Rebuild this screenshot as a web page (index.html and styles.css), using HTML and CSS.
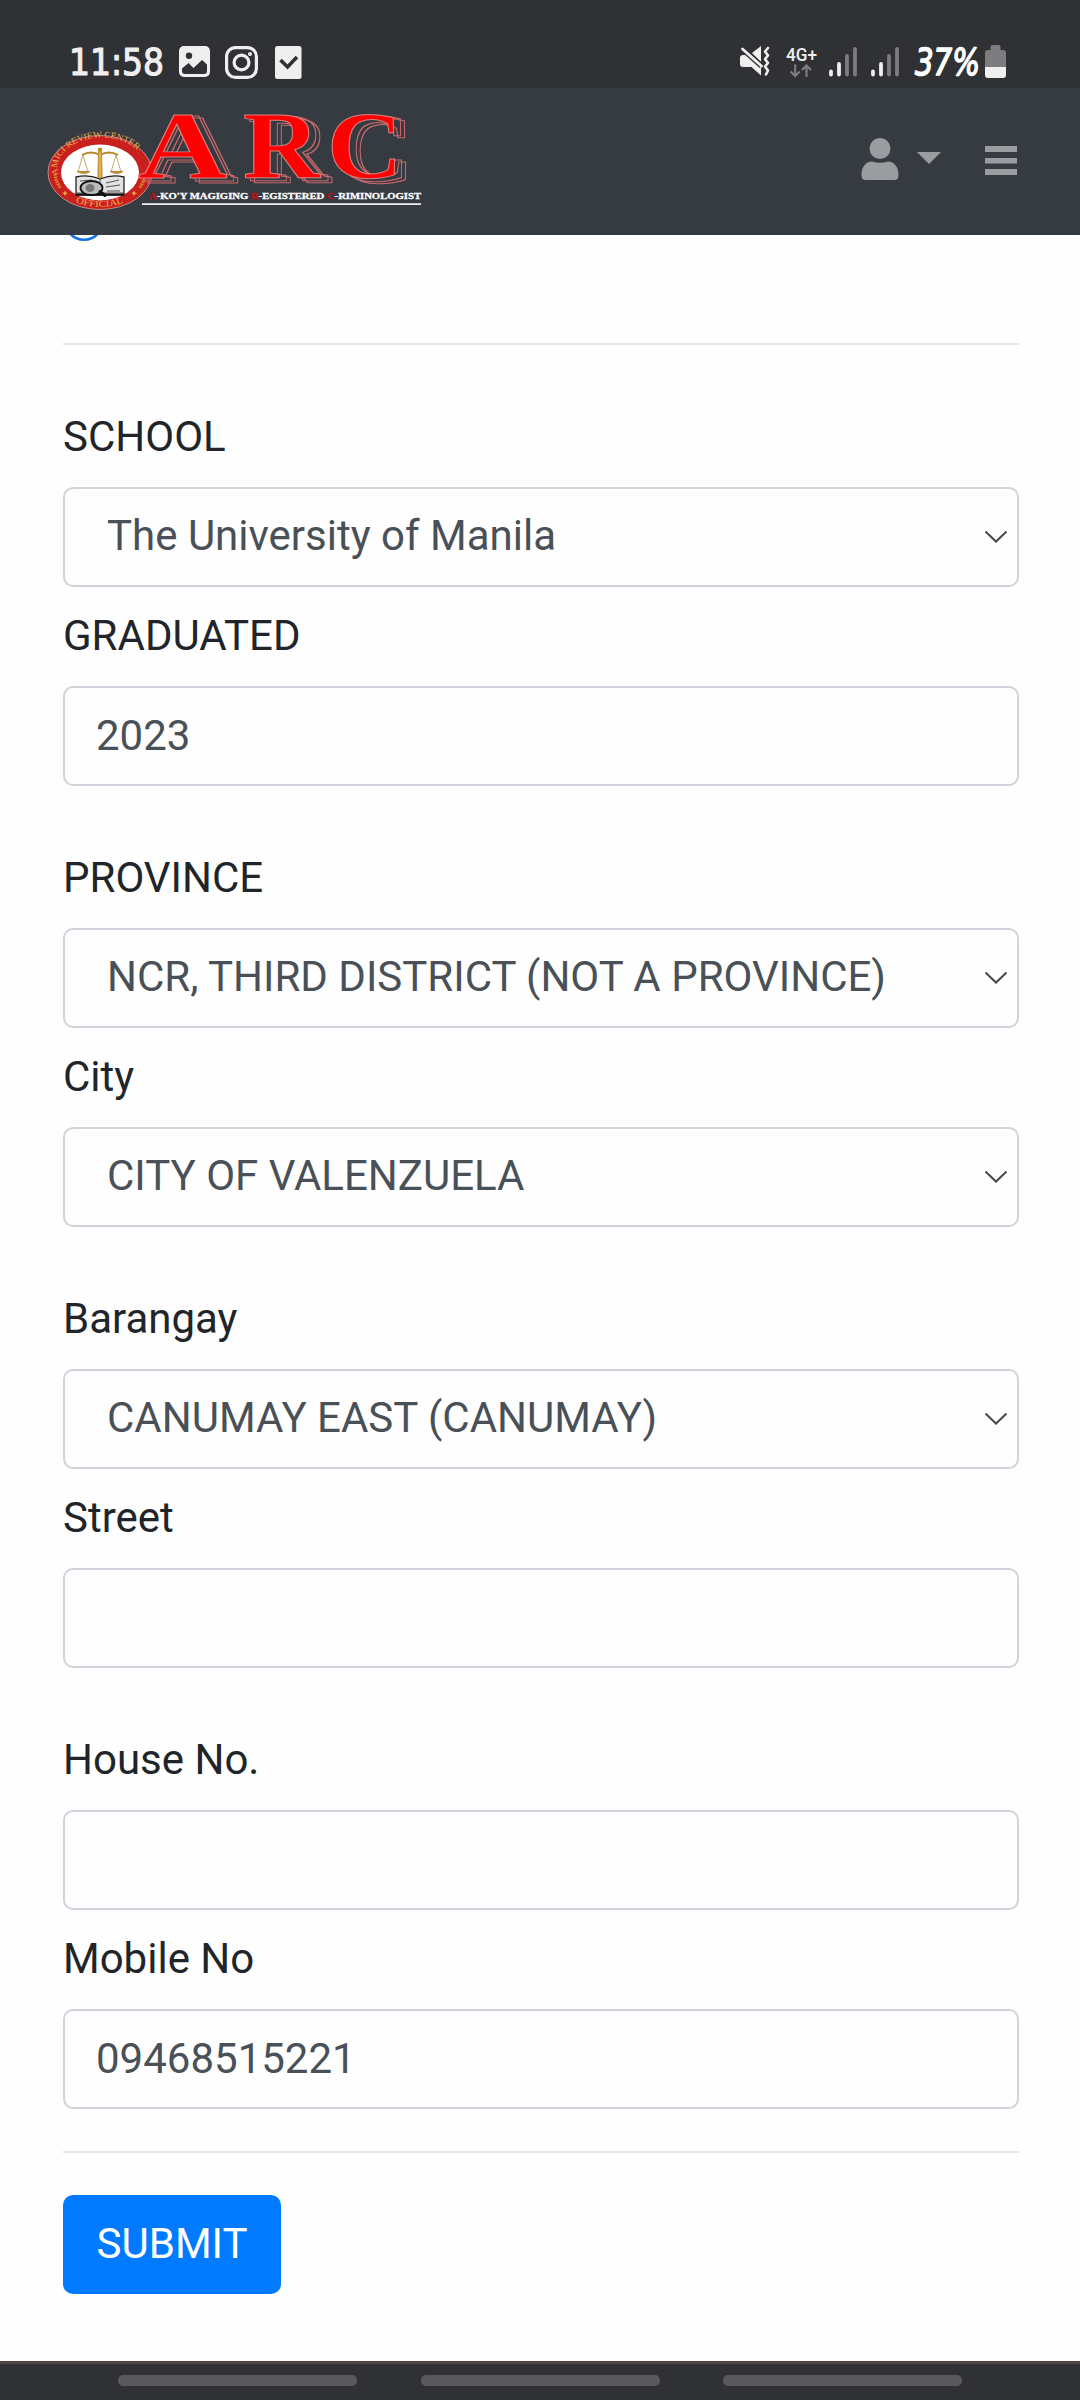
FILE: index.html
```html
<!DOCTYPE html>
<html lang="en">
<head>
<meta charset="utf-8">
<title>ARC – Student Profile</title>
<link rel="stylesheet" href="styles.css">
</head>
<body>
<div class="status-bar">
  <svg class="status-left" width="250" height="48" viewBox="60 40 250 48">
    <text class="clock" x="69" y="74.500" textLength="95" lengthAdjust="spacingAndGlyphs">11:58</text>
    <path fill="#efefef" fill-rule="evenodd" d="M184 46h21a5 5 0 0 1 5 5v21a5 5 0 0 1-5 5h-21a5 5 0 0 1-5-5V51a5 5 0 0 1 5-5zM189 52.500a3.200 3.200 0 1 0 0 6.400a3.200 3.200 0 0 0 0-6.400zM182 68.500v2.500a3 3 0 0 0 3 3h19a3 3 0 0 0 3-3v-6.500l-5-4.500-8.500 8-5-5z"/>
    <g fill="none" stroke="#efefef" stroke-width="3.200">
      <rect x="226.600" y="47.600" width="29.800" height="29.800" rx="9"/>
      <circle cx="241.500" cy="62.500" r="7.400"/>
    </g>
    <circle cx="250" cy="54" r="2" fill="#efefef"/>
    <rect x="275" y="46" width="26.500" height="33" rx="2.500" fill="#efefef"/>
    <path d="M280.500 60l7 7 9.500-10" fill="none" stroke="#303135" stroke-width="3.600"/>
  </svg>
  <svg class="status-right" width="280" height="48" viewBox="735 40 280 48">
    <g fill="#efefef">
      <path d="M743 55h7l11 10v10.500l-9.500-8.500H743q-3 0-3-3v-6q0-3 3-3zM752 53l9-7v16z"/>
      <path d="M742.500 49l19 17" stroke="#303135" stroke-width="5.500"/>
      <path d="M742.500 49l19 17" stroke="#efefef" stroke-width="2.800" stroke-linecap="round"/>
      <path d="M768 48l-3 3.500 3 4-3 3.500 3 4-3 3.500 3 4-2 4" fill="none" stroke="#efefef" stroke-width="2.600" stroke-linecap="round" stroke-linejoin="round"/>
    </g>
    <text class="network" x="786" y="60.500" textLength="31" lengthAdjust="spacingAndGlyphs">4G+</text>
    <path d="M795.200 64.500v11.500m-4.500-4.500l4.500 4.500 4.500-4.500M806.500 77V65.500m-4.500 4.500l4.500-4.500 4.500 4.500" fill="none" stroke="#7d7d7f" stroke-width="2.200"/>
    <g stroke-width="3.800" stroke-linecap="round">
      <path stroke="#efefef" d="M831 71.500v3M839 64v10.500M873 71.500v3M881 64v10.500"/>
      <path stroke="#7d7d7f" d="M847 56v18.500M855 49v25.500M889 56v18.500M897 49v25.500"/>
    </g>
    <text class="battery-level" x="915" y="75" textLength="65" lengthAdjust="spacingAndGlyphs">37%</text>
    <path fill="#7d7d7f" d="M992.500 45h6q2 0 2 2v3h2.500q3 0 3 3v15h-21V53q0-3 3-3h2.500v-3q0-2 2-2z"/>
    <path fill="#efefef" d="M985 67h21v8q0 3-3 3h-15q-3 0-3-3z"/>
  </svg>
</div>

<header class="navbar">
  <svg class="brand" width="390" height="132" viewBox="40 88 390 132">
    <defs>
      <path id="ring-top" d="M61 180 A44 30.500 0 1 1 142 180"/>
      <path id="ring-bottom" d="M66 197 A48.500 34.500 0 0 0 134 197"/>
      <linearGradient id="gold" x1="0" y1="0" x2="1" y2="0">
        <stop offset="0" stop-color="#a8701a"/><stop offset=".5" stop-color="#efc35d"/><stop offset="1" stop-color="#a8701a"/>
      </linearGradient>
      <!-- hollow outline offset down and right behind the letters -->
      <filter id="outline" filterUnits="userSpaceOnUse" x="120" y="90" width="310" height="115" color-interpolation-filters="sRGB">
        <feMorphology in="SourceAlpha" operator="dilate" radius="1" result="grown"/>
        <feComposite in="grown" in2="SourceAlpha" operator="out" result="edge"/>
        <feOffset in="edge" dx="6" dy="2" result="near"/>
        <feOffset in="edge" dx="10" dy="4" result="far"/>
        <feMerge result="edges"><feMergeNode in="near"/><feMergeNode in="far"/></feMerge>
        <feFlood flood-color="#c9696b"/>
        <feComposite in2="edges" operator="in" result="pink"/>
        <feMerge><feMergeNode in="pink"/><feMergeNode in="SourceGraphic"/></feMerge>
      </filter>
    </defs>
    <ellipse cx="100" cy="172.500" rx="52" ry="37" fill="#c9201f" stroke="#b78d8c" stroke-width="1"/>
    <ellipse cx="100" cy="172.500" rx="39" ry="28" fill="#fff"/>
    <text class="ring-text"><textPath href="#ring-top" startOffset="6" textLength="104" lengthAdjust="spacingAndGlyphs">AMICI REVIEW CENTER</textPath></text>
    <text class="ring-text"><textPath href="#ring-bottom" startOffset="11" textLength="49" lengthAdjust="spacingAndGlyphs">OFFICIAL</textPath></text>
    <g fill="none" stroke="#d99a35" stroke-width="3" stroke-dasharray="1.500 1">
      <path d="M55 174q1 9 6 14M145 174q-1 9-6 14"/>
    </g>
    <path fill="#e7b04a" d="M65 190.500l1 2 2 .5-2 1-1 2-1-2-2-1 2-.5zM134 190.500l1 2 2 .5-2 1-1 2-1-2-2-1 2-.5z"/>
    <!-- open law book -->
    <path d="M76 177q12-3 24 2 12-5 24-2v18h-48z" fill="#e2e2e2" stroke="#222" stroke-width="1.300"/>
    <path d="M76 193h48M100 179v14M106 183l13-3M106 187l14-2M80 181l12-1M107 191h13" stroke="#555" stroke-width="1"/>
    <path d="M76 194.500h48" stroke="#111" stroke-width="2"/>
    <!-- balance scale -->
    <path d="M82 155q9-5 18 0q9-5 18 0" fill="none" stroke="#bb8222" stroke-width="1.800"/>
    <path d="M83 155l-5 17M83 155l5 17M116 155l-5 17M116 155l5 17" stroke="#b9924a" stroke-width=".8"/>
    <path d="M77 171.500h13q-6 4-13 0zM110 171.500h13q-6 4-13 0z" fill="#c89131" stroke="#ad781f" stroke-width=".8"/>
    <path d="M98 152h4l.5 26h-5z" fill="url(#gold)"/>
    <circle cx="100" cy="150" r="2.400" fill="#c88f2a"/>
    <ellipse cx="91.500" cy="188" rx="11" ry="7" fill="#bcbcbc" stroke="#111" stroke-width="1.800"/>
    <ellipse cx="90" cy="188" rx="4.500" ry="4" fill="#777"/>
    <path d="M100 191.500l5 4" stroke="#111" stroke-width="3" stroke-linecap="round"/>
    <g class="letters" filter="url(#outline)">
      <text transform="translate(138 178) scale(1.290 1)">A</text>
      <text transform="translate(243 178) scale(1.110 1)">R</text>
      <text transform="translate(327 178) scale(1.090 1)">C</text>
    </g>
    <text class="tagline" x="149" y="198.500" textLength="272" lengthAdjust="spacingAndGlyphs"><tspan class="initial">A</tspan>-KO'Y MAGIGING <tspan class="initial">R</tspan>-EGISTERED <tspan class="initial">C</tspan>-RIMINOLOGIST</text>
    <rect x="142" y="203.300" width="279" height="1.600" fill="#fff"/>
  </svg>
  <svg class="nav-icons" width="170" height="60" viewBox="855 130 170 60" fill="#999da0">
    <circle cx="880" cy="148.500" r="10.500"/>
    <path d="M872 161.500q8 2.500 16 0c6.500 0 10.500 6 10.500 13q0 5.500-4 5.500h-29q-4 0-4-5.500c0-7 4-13 10.500-13z"/>
    <path d="M917 152h24l-12 12z"/>
    <path d="M985 146h32v6h-32zM985 158h32v5.500h-32zM985 169h32v6h-32z"/>
  </svg>
</header>

<main class="page">
  <svg class="radio" width="42" height="6" viewBox="0 35.500 42 6"><circle cx="21" cy="21" r="19.200" fill="none" stroke="#1373e6" stroke-width="2.600"/></svg>
  <hr class="rule rule-top">
  <form class="form">
    <div class="row">
      <div class="label">SCHOOL</div>
      <div class="field select"><span>The University of Manila</span><svg width="24" height="14" viewBox="0 0 24 14"><path d="M1.500 1.500L12 11.500 22.500 1.500"/></svg></div>
      <div class="label second">GRADUATED</div>
      <div class="field"><span>2023</span></div>
    </div>
    <div class="row">
      <div class="label">PROVINCE</div>
      <div class="field select"><span>NCR, THIRD DISTRICT (NOT A PROVINCE)</span><svg width="24" height="14" viewBox="0 0 24 14"><path d="M1.500 1.500L12 11.500 22.500 1.500"/></svg></div>
      <div class="label second">City</div>
      <div class="field select"><span>CITY OF VALENZUELA</span><svg width="24" height="14" viewBox="0 0 24 14"><path d="M1.500 1.500L12 11.500 22.500 1.500"/></svg></div>
    </div>
    <div class="row">
      <div class="label">Barangay</div>
      <div class="field select"><span>CANUMAY EAST (CANUMAY)</span><svg width="24" height="14" viewBox="0 0 24 14"><path d="M1.500 1.500L12 11.500 22.500 1.500"/></svg></div>
      <div class="label second">Street</div>
      <div class="field"></div>
    </div>
    <div class="row">
      <div class="label">House No.</div>
      <div class="field"></div>
      <div class="label second">Mobile No</div>
      <div class="field"><span>09468515221</span></div>
    </div>
    <hr class="rule">
    <button class="submit" type="button">SUBMIT</button>
  </form>
</main>
<footer class="gesture-bar"><i></i><i></i><i></i></footer>
</body>
</html>
```
FILE: styles.css
```css
* { box-sizing: border-box; }
body {
  margin: 0;
  width: 1080px;
  height: 2400px;
  overflow: hidden;
  display: flex;
  flex-direction: column;
  background: #fefefe;
  color: #212529;
  font: 42px/63px Roboto, sans-serif;
}
svg { display: block; flex: none; }

.status-bar {
  height: 88px;
  flex: none;
  display: flex;
  justify-content: space-between;
  align-items: flex-end;
  padding: 0 65px 0 60px;
  background: #303135;
}
.clock {
  font: 37px "DejaVu Sans", sans-serif;
  fill: #efefef;
  stroke: #efefef;
  stroke-width: 1.2px;
  stroke-linejoin: round;
}
.battery-level {
  font: italic 37px "DejaVu Sans", sans-serif;
  fill: #fff;
  stroke: #fff;
  stroke-width: 1.5px;
  stroke-linejoin: round;
}
.network { font: 500 18px Roboto, sans-serif; fill: #efefef; }

.navbar {
  height: 147px;
  flex: none;
  display: flex;
  justify-content: space-between;
  align-items: flex-start;
  padding: 0 55px 0 40px;
  background: #363a41;
}
.nav-icons { margin-top: 42px; }
.ring-text { font: 9px "Liberation Serif", serif; fill: #edb04c; }
.letters { font: bold 96px "Liberation Serif", serif; fill: #fe0000; stroke: #d9807f; stroke-width: 1px; }
.tagline { font: bold 9px "Liberation Serif", serif; fill: #fff; stroke: #fff; stroke-width: .3px; }
.initial { fill: #c0101a; stroke: #c0101a; }

.page { flex: 1; padding: 0 61px 0 63px; }
.radio { height: 6px; }
.rule { height: 2px; margin: 0; border: 0; background: #e4e5e5; }
.rule-top { margin: 102px 0 58px; }
.row { margin-bottom: 58px; }
.row:last-of-type { margin-bottom: 42px; }
.label { height: 84px; padding-top: 2px; }
.second { margin-top: 15px; }
.field {
  height: 100px;
  display: flex;
  align-items: center;
  padding: 0 32px 0 31px;
  border: 2px solid #ced4da;
  border-radius: 10px;
  color: #495057;
}
.field span { padding-bottom: 2px; }
.select { justify-content: space-between; padding: 0 9px 0 42px; }
.select span { padding-bottom: 4px; }
.select path { fill: none; stroke: #44494e; stroke-width: 2; }
.submit {
  display: block;
  width: 218px;
  height: 99px;
  margin-top: 42px;
  padding: 0 0 2px;
  border: 0;
  border-radius: 10px;
  background: #007bff;
  color: #fff;
  font: 42px/63px Roboto, sans-serif;
}

.gesture-bar {
  height: 39px;
  flex: none;
  display: flex;
  justify-content: space-between;
  padding: 11px 118px 0;
  border-top: 3px solid #504443;
  background: #303135;
}
.gesture-bar i { width: 239px; height: 11px; border-radius: 5px; background: #59595c; }
```
